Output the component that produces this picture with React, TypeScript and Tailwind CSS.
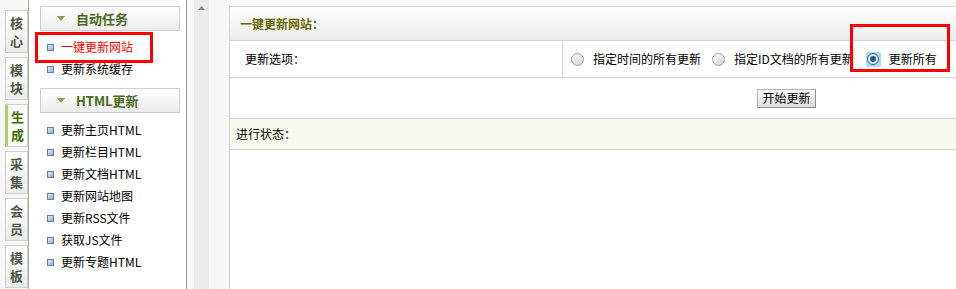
import React from "react"

const font = { fontFamily: '"Noto Sans CJK SC", "Liberation Sans", sans-serif' }

const tabs = [
  { label: ["核", "心"], active: false },
  { label: ["模", "块"], active: false },
  { label: ["生", "成"], active: true },
  { label: ["采", "集"], active: false },
  { label: ["会", "员"], active: false },
  { label: ["模", "板"], active: false },
]

const htmlItems = ["更新主页HTML", "更新栏目HTML", "更新文档HTML", "更新网站地图", "更新RSS文件", "获取JS文件", "更新专题HTML"]

function Bullet() {
  return <span className="h-[7px] w-[7px] shrink-0 border border-[#6f7f93] bg-gradient-to-br from-[#dbe8fa] to-[#8fb0e0]" />
}

function MenuItem({ text, red }: { text: string; red?: boolean }) {
  return (
    <div className="flex h-[22px] items-center gap-[7px] pl-[18px]">
      <Bullet />
      <span className={red ? "text-[#ff0000]" : "text-black"}>{text}</span>
    </div>
  )
}

function MenuHeader({ text }: { text: string }) {
  return (
    <div className="ml-[11px] flex h-[25px] w-[140px] items-center border border-[#cfcfcf] bg-gradient-to-b from-white to-[#ececec] pl-[16px]">
      <svg width="8" height="5" viewBox="0 0 8 5" className="mr-[11px]">
        <path d="M0 0 L8 0 L4 5 Z" fill="#7fa05a" />
      </svg>
      <span className="text-[13px] font-bold text-[#4b6a22]">{text}</span>
    </div>
  )
}

function Radio({ checked, className = "" }: { checked?: boolean; className?: string }) {
  if (checked) {
    return (
      <span className={`flex h-[15px] w-[15px] shrink-0 items-center justify-center rounded-[2px] bg-[#a9dcf6] ${className}`}>
        <span className="flex h-[12px] w-[12px] items-center justify-center rounded-full border border-[#44556a] bg-[#e8eef4]">
          <span className="h-[6px] w-[6px] rounded-full bg-[#1a5e9c]" />
        </span>
      </span>
    )
  }
  return (
    <span className={`block h-[13px] w-[13px] shrink-0 rounded-full border border-[#a6a6a6] bg-gradient-to-br from-white to-[#cfcfcf] ${className}`} />
  )
}

export default function App() {
  return (
    <div className="flex h-[289px] w-[956px] overflow-hidden bg-white text-[12px] leading-none" style={font}>
      {/* left tabs */}
      <div className="flex w-[29px] shrink-0 flex-col gap-[4px] border-r border-[#a9ae98] bg-[#f7f7f7] pt-[10px]">
        {tabs.map((t, i) => (
          <div
            key={i}
            className={
              t.active
                ? "ml-[5px] flex h-[43px] w-[23px] flex-col items-center justify-center gap-[5px] border border-l-[3px] border-[#cfcfcf] border-l-[#a6d36a] bg-white text-[13px] font-bold text-[#3f6a00]"
                : "ml-[5px] flex h-[43px] w-[23px] flex-col items-center justify-center gap-[5px] border border-[#cfcfcf] bg-gradient-to-b from-white to-[#ececec] text-[13px] font-bold text-[#4e5546]"
            }
          >
            <span>{t.label[0]}</span>
            <span>{t.label[1]}</span>
          </div>
        ))}
      </div>

      {/* sidebar */}
      <div className="relative w-[158px] shrink-0 border-r border-[#9a9a9a] bg-white pt-[6px]">
        <MenuHeader text="自动任务" />
        <div className="pt-[5px]">
          <MenuItem text="一键更新网站" red />
          <MenuItem text="更新系统缓存" />
        </div>
        <div className="mt-[8px]">
          <MenuHeader text="HTML更新" />
        </div>
        <div className="pt-[6px]">
          {htmlItems.map((t) => (
            <MenuItem key={t} text={t} />
          ))}
        </div>
        <div className="pointer-events-none absolute left-[6px] top-[32px] h-[31px] w-[118px] border-[3px] border-[#ff0000]" />
      </div>

      {/* scrollbar strip */}
      <div className="w-[7px] shrink-0 bg-[#f7f7f7]" />
      <div className="flex w-[15px] shrink-0 justify-center bg-[#ececec] pt-[6px]">
        <svg width="7" height="4" viewBox="0 0 7 4">
          <path d="M0 4 L3.5 0 L7 4 Z" fill="#8a8a8a" />
        </svg>
      </div>
      <div className="w-[20px] shrink-0 bg-[#f7f7f7]" />

      {/* main */}
      <div className="relative flex min-w-0 flex-1 flex-col bg-[#f7f7f7] pt-[6px]">
        <div className="flex flex-1 flex-col border-l border-t border-[#d3d3d3] bg-white">
          <div className="flex h-[34px] items-center border-b border-[#d3d3d3] bg-gradient-to-b from-white to-[#ececec] pl-[10px]">
            <span className="font-bold text-[#666600]">一键更新网站：</span>
          </div>
          <div className="flex h-[37px] border-b border-[#d6d6d6]">
            <div className="flex w-[333px] shrink-0 items-center border-r border-[#d6d6d6] pl-[15px]">更新选项：</div>
            <div className="flex shrink-0 items-center whitespace-nowrap pl-[8px]">
              <Radio />
              <span className="ml-[9px] shrink-0">指定时间的所有更新</span>
              <Radio className="ml-[11px]" />
              <span className="ml-[9px] shrink-0">指定ID文档的所有更新</span>
              <Radio checked className="ml-[12px]" />
              <span className="ml-[8px] shrink-0">更新所有</span>
            </div>
          </div>
          <div className="flex h-[41px] items-center border-b border-[#d6d6d6] pl-[527px]">
            <button className="h-[19px] w-[59px] border border-[#b5b5b5] border-b-[#8f8f8f] border-r-[#8f8f8f] bg-gradient-to-b from-white to-[#dcdcdc] text-[12px] text-black">
              开始更新
            </button>
          </div>
          <div className="flex h-[31px] items-center border-b border-[#d6d6d6] bg-[#f8f9ee] pl-[6px]">进行状态：</div>
          <div className="flex-1 bg-white" />
        </div>
        <div className="pointer-events-none absolute left-[621px] top-[24px] h-[48px] w-[100px] border-[3px] border-[#ff0000]" />
      </div>
    </div>
  )
}
